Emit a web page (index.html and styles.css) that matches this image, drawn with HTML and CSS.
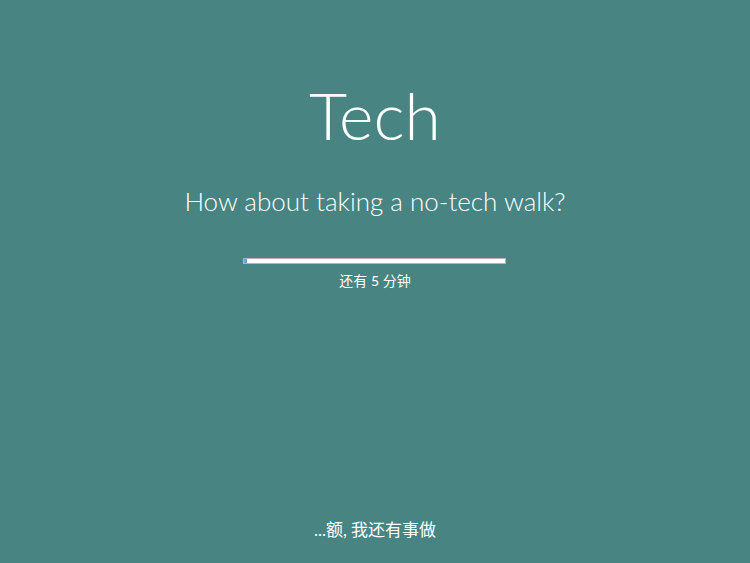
FILE: index.html
```html
<!DOCTYPE html>
<html lang="zh">
<head>
<meta charset="utf-8">
<title>Tech</title>
<link rel="stylesheet" href="styles.css">
</head>
<body>
<main class="page">
  <section class="center">
    <h1 class="title">Tech</h1>
    <p class="subtitle">How about taking a no-tech walk?</p>
    <div class="progress"><div class="progress-fill"></div></div>
    <p class="remaining">还有 5 分钟</p>
  </section>
  <footer class="footer">
    <a class="dismiss">...额, 我还有事做</a>
  </footer>
</main>
</body>
</html>
```
FILE: styles.css
```css
html, body {
  margin: 0;
  padding: 0;
  height: 100%;
}
body {
  background: #488482;
  color: #ffffff;
  font-family: "Lato", "Noto Sans CJK SC", sans-serif;
}
.page {
  height: 563px;
  display: flex;
  flex-direction: column;
  align-items: center;
  box-sizing: border-box;
  padding-top: 82px;
  padding-bottom: 25px;
}
.center {
  flex: 1;
  display: flex;
  flex-direction: column;
  align-items: center;
}
.title {
  margin: 0;
  font-size: 66px;
  line-height: 66px;
  font-weight: 300;
}
.subtitle {
  margin: 40px 0 0;
  font-size: 26px;
  line-height: 26px;
  font-weight: 300;
}
.progress {
  margin-top: 44px;
  width: 261px;
  height: 4px;
  border: 1px solid #b4b4b4;
  background: #ffffff;
  display: flex;
}
.progress-fill {
  width: 3px;
  background: #6f9fd6;
}
.remaining {
  margin: 10px 0 0;
  font-size: 14px;
  line-height: 14px;
  font-weight: 400;
}
.footer {
  display: flex;
  justify-content: center;
}
.dismiss {
  font-size: 17px;
  line-height: 17px;
  color: #ffffff;
  cursor: pointer;
}
```
